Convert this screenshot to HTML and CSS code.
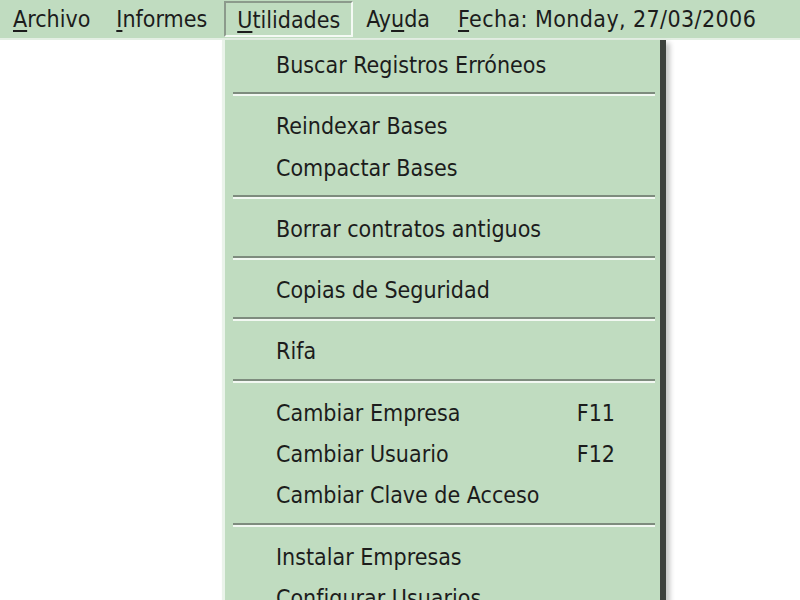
FILE: index.html
```html
<!DOCTYPE html>
<html lang="es">
<head>
    <meta charset="UTF-8">
    <title>Utilidades</title>
    <link rel="stylesheet" href="styles.css">
</head>
<body>
    <div class="menubar">
        <span class="top-item"><u>A</u>rchivo</span>
        <span class="top-item"><u>I</u>nformes</span>
        <span class="top-item open"><u>U</u>tilidades</span>
        <span class="top-item">Ay<u>u</u>da</span>
        <span class="top-item fecha"><u>F</u>echa: Monday, 27/03/2006</span>
    </div>

    <div class="dropdown">
        <div class="entry">Buscar Registros Erróneos</div>
        <div class="sep"></div>
        <div class="entry">Reindexar Bases</div>
        <div class="entry">Compactar Bases</div>
        <div class="sep"></div>
        <div class="entry">Borrar contratos antiguos</div>
        <div class="sep"></div>
        <div class="entry">Copias de Seguridad</div>
        <div class="sep"></div>
        <div class="entry">Rifa</div>
        <div class="sep"></div>
        <div class="entry"><span>Cambiar Empresa</span><span class="key">F11</span></div>
        <div class="entry"><span>Cambiar Usuario</span><span class="key">F12</span></div>
        <div class="entry">Cambiar Clave de Acceso</div>
        <div class="sep"></div>
        <div class="entry">Instalar Empresas</div>
        <div class="entry">Configurar Usuarios</div>
    </div>
</body>
</html>
```

FILE: styles.css
```css
body {
    margin: 0;
    background-color: #fff;
    font-family: "DejaVu Sans", sans-serif;
    font-stretch: condensed;
    font-size: 23px;
    color: #1c1c1c;
}
u {
    text-decoration-thickness: 2px;
    text-underline-offset: 3px;
}

/* top menu bar */
.menubar {
    display: flex;
    align-items: center;
    height: 38px;
    background-color: #c0dcc0;
    border-bottom: 2px solid #e4efe4;
}
.top-item {
    padding: 0 12px;
    height: 36px;
    line-height: 34px;
    box-sizing: border-box;
    border: 1px solid transparent;
}
.top-item.open {
    margin-left: 4px;
    padding: 0 11px;
    border-width: 2px;
    border-color: #8c9a8c #f4faf4 #f4faf4 #8c9a8c;
}
.top-item.fecha {
    margin-left: 2px;
    letter-spacing: 0.4px;
}

/* dropped-down menu for Utilidades */
.dropdown {
    position: absolute;
    left: 222px;
    top: 40px;
    width: 422px;
    height: 600px;
    padding: 5px 5px 0 8px;
    background-color: #c0dcc0;
    border-left: 3px solid #eaf3ea;
    border-right: 6px solid #3e423e;
    box-shadow: 4px 3px 5px rgba(0, 0, 0, 0.22);
}
.entry {
    display: flex;
    justify-content: space-between;
    height: 41.3px;
    line-height: 41.3px;
    padding-left: 43px;
    padding-right: 40px;
}
.sep {
    height: 20px;
    padding-top: 6px;
    box-sizing: border-box;
}
.sep::after {
    content: "";
    display: block;
    height: 2px;
    background-color: #7e8c7e;
    border-bottom: 2px solid #f2f8f2;
}
```
